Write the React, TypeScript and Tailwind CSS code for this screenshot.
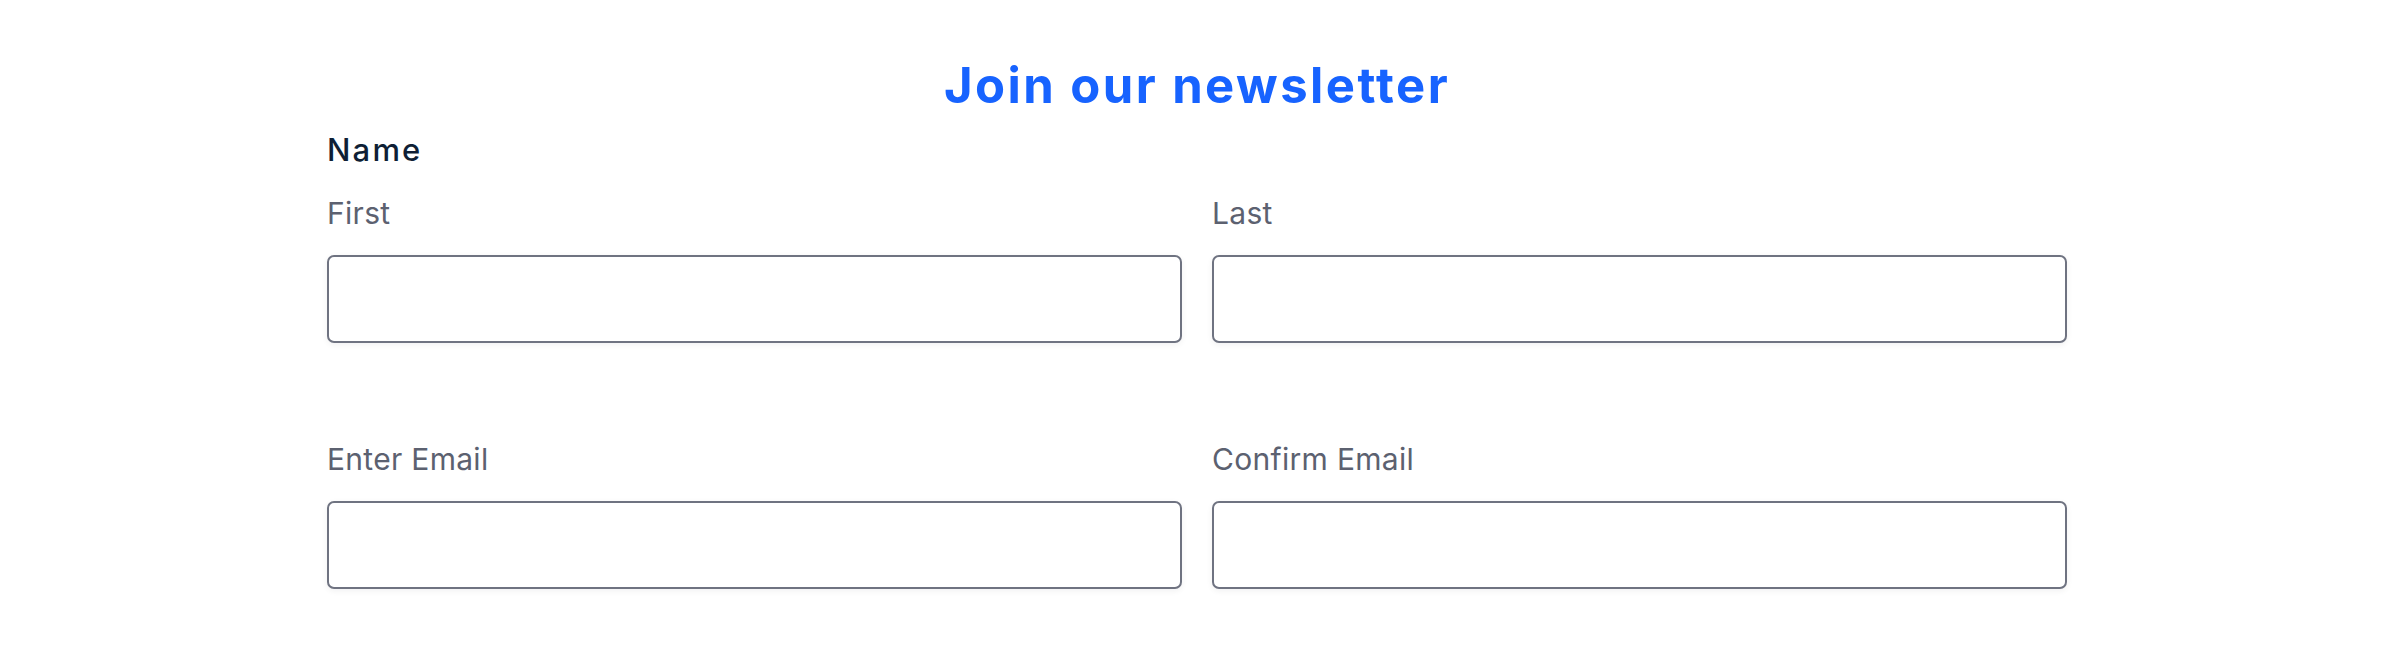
import React from "react";

const font = { fontFamily: "Inter, 'Noto Sans', sans-serif" };

function Field({ label }: { label: string }) {
  return (
    <div className="flex flex-col">
      <label className="text-[30px] leading-[30px] tracking-[0.01em] text-[#5c6170]">{label}</label>
      <input
        type="text"
        className="mt-[27px] h-[88px] w-full rounded-[7px] border-2 border-[#6f7381] bg-white shadow-[0_2px_6px_rgba(17,24,39,0.06)] outline-none"
      />
    </div>
  );
}

export default function App() {
  return (
    <div className="min-h-[672px] w-full bg-white" style={font}>
      <div className="pl-[327px] pt-[61px]">
        <div className="w-[1740px]">
          <h1 className="text-center text-[49px] font-bold leading-[49px] tracking-[0.05em] text-[#1763ff]">
            Join our newsletter
          </h1>
          <div className="mt-[24px] text-[31px] font-medium leading-[31px] tracking-[0.07em] text-[#0f1f35]">Name</div>
          <div className="mt-[33px] grid grid-cols-2 gap-x-[30px]">
            <Field label="First" />
            <Field label="Last" />
          </div>
          <div className="mt-[101px] grid grid-cols-2 gap-x-[30px]">
            <Field label="Enter Email" />
            <Field label="Confirm Email" />
          </div>
        </div>
      </div>
    </div>
  );
}
